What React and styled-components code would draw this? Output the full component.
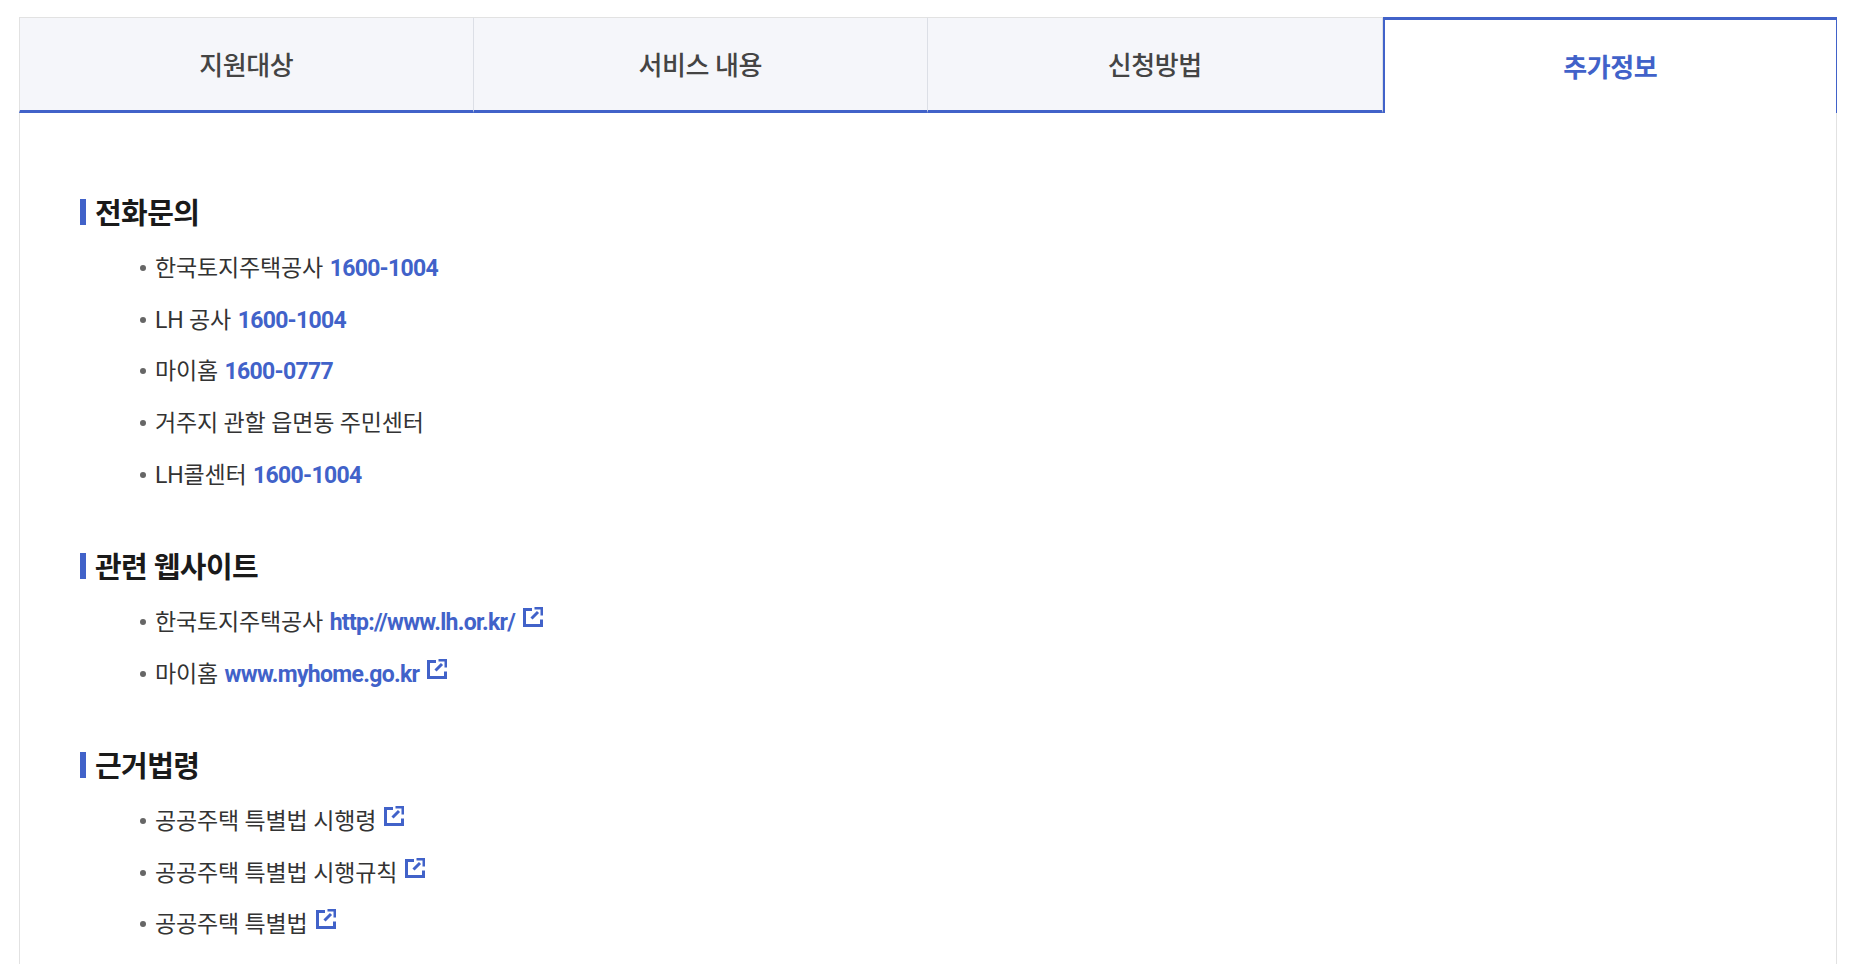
import React from "react";
import styled, { createGlobalStyle } from "styled-components";

const Global = createGlobalStyle`
  html, body { margin: 0; padding: 0; height: 100%; overflow: hidden; background: #fff; }
  body { font-family: Roboto, "Noto Sans CJK KR", sans-serif; }
`;
const BLUE = "#4162c9";
const Page = styled.div`
  height: 964px; padding: 17px 20px 0 19px; box-sizing: border-box; overflow: hidden;
`;
const Tabs = styled.div`
  display: grid; grid-template-columns: repeat(4, 1fr); height: 96px;
`;
const Tab = styled.div`
  display: flex; align-items: center; justify-content: center; box-sizing: border-box;
  font-size: 26px; letter-spacing: -0.4px; padding-bottom: 2px;
  ${(p) => p.$active ? `
    background: #fff; color: ${BLUE}; font-weight: 700;
    border: 1px solid ${BLUE}; border-left-width: 2px; border-top-width: 3px; border-bottom: 0;
  ` : `
    background: #f5f6fa; color: #444; font-weight: 500; border-top: 1px solid #e2e2e2;
    border-right: 1px solid #dcdfe6; border-bottom: 3px solid ${BLUE};
    &:first-child { border-left: 1px solid #e2e2e2; }
  `}
`;
const Panel = styled.div`
  border-left: 1px solid #e2e2e2; border-right: 1px solid #e2e2e2;
  height: 900px; box-sizing: border-box; padding: 81px 60px 0;
`;
const Section = styled.section`
  margin-bottom: 46.5px;
`;
const Heading = styled.h3`
  margin: 0 0 8px; padding-left: 15px; position: relative;
  font-size: 29px; line-height: 41px; font-weight: 700; color: #1a1a1a; letter-spacing: -0.6px;
  &::before { content: ""; position: absolute; left: 0; top: 5px; width: 6px; height: 26px; background: ${BLUE}; }
`;
const List = styled.ul`
  list-style: none; margin: 0; padding: 0 0 0 75px;
`;
const Item = styled.li`
  position: relative; font-size: 23px; line-height: 51.7px; color: #333; letter-spacing: -0.15px;
  white-space: nowrap;
  &::before { content: ""; position: absolute; left: -15px; top: 22px; width: 6px; height: 6px; border-radius: 50%; background: #666; }
`;
const Link = styled.a`
  color: ${BLUE}; font-weight: 700; letter-spacing: -0.7px; text-decoration: none; margin-left: 1px;
`;
const Icon = styled.svg`
  width: 20px; height: 20px; margin-left: 8px; vertical-align: 3px; color: ${BLUE};
`;
const Ext = () => (
  <Icon viewBox="0 0 20 20" fill="none" stroke="currentColor" strokeWidth="3">
    <path d="M9 2.5H1.5V18.5H18.5V12.5" />
    <path d="M8.5 11.5L15 5" />
    <path d="M11.5 0H20V8.5H17.5V2.5H11.5Z" fill="currentColor" stroke="none" />
  </Icon>
);

export default function App() {
  return (
    <>
      <Global />
      <Page>
        <Tabs>
          <Tab>지원대상</Tab>
          <Tab>서비스 내용</Tab>
          <Tab>신청방법</Tab>
          <Tab $active>추가정보</Tab>
        </Tabs>
        <Panel>
          <Section>
            <Heading>전화문의</Heading>
            <List>
              <Item>한국토지주택공사 <Link>1600-1004</Link></Item>
              <Item>LH 공사 <Link>1600-1004</Link></Item>
              <Item>마이홈 <Link>1600-0777</Link></Item>
              <Item>거주지 관할 읍면동 주민센터</Item>
              <Item>LH콜센터 <Link>1600-1004</Link></Item>
            </List>
          </Section>
          <Section>
            <Heading>관련 웹사이트</Heading>
            <List>
              <Item>한국토지주택공사 <Link>http://www.lh.or.kr/</Link><Ext /></Item>
              <Item>마이홈 <Link>www.myhome.go.kr</Link><Ext /></Item>
            </List>
          </Section>
          <Section>
            <Heading>근거법령</Heading>
            <List>
              <Item>공공주택 특별법 시행령<Ext /></Item>
              <Item>공공주택 특별법 시행규칙<Ext /></Item>
              <Item>공공주택 특별법<Ext /></Item>
            </List>
          </Section>
        </Panel>
      </Page>
    </>
  );
}
